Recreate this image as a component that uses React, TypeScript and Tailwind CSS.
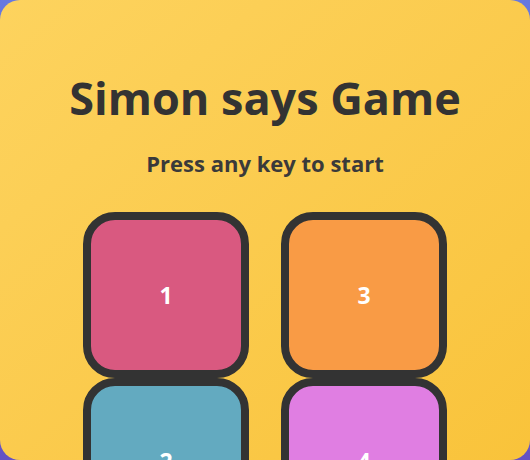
const pads = [
  { id: 1, color: "bg-[#d95980]" },
  { id: 3, color: "bg-[#f99b45]" },
  { id: 2, color: "bg-[#63aac0]" },
  { id: 4, color: "bg-[#e07ee2]" },
];

export default function App() {
  return (
    <div className="h-[460px] w-[530px] bg-gradient-to-b from-[#6779e0] to-[#6552c4] font-['Open_Sans',sans-serif]">
      <div className="flex h-full w-full flex-col items-center overflow-hidden rounded-[20px] bg-gradient-to-br from-[#fdd35e] to-[#f9c33a] pt-[74px] text-[#333]">
        <h1 className="text-[45px] font-bold leading-[48px]">Simon says Game</h1>
        <h3 className="mt-[30px] text-[22px] font-bold leading-[22px] text-[#3a3a3a]">Press any key to start</h3>
        <div className="mt-[38px] grid shrink-0 grid-cols-[166px_166px] gap-x-8">
          {pads.map((p) => (
            <button
              key={p.id}
              className={`flex h-[166px] w-[166px] items-center justify-center rounded-[32px] border-8 border-[#333] text-[23px] font-bold text-white ${p.color}`}
            >
              {p.id}
            </button>
          ))}
        </div>
      </div>
    </div>
  );
}
